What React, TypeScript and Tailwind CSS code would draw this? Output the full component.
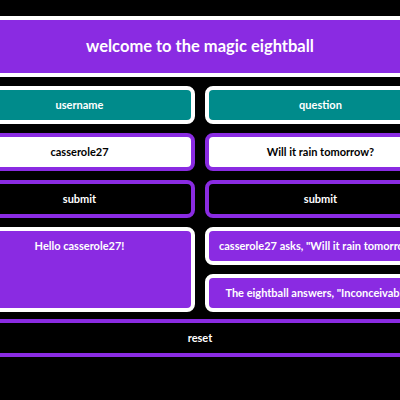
import React from "react";

const font = { fontFamily: "Lato, 'Noto Sans', sans-serif" };

function Box({ className, children }: { className: string; children?: React.ReactNode }) {
  return (
    <div className={`border-4 rounded-lg text-center font-bold text-[11px] leading-[30px] whitespace-nowrap overflow-hidden ${className}`}>
      {children}
    </div>
  );
}

export default function App() {
  return (
    <div className="w-[400px] h-[400px] bg-black overflow-hidden flex justify-center" style={font}>
      <div className="w-[472px] shrink-0 pt-4 flex flex-col">
        <div className="h-[61px] border-y-4 border-white bg-[#8a2be2] flex items-center justify-center text-white font-bold text-[16.5px]">
          welcome to the magic eightball
        </div>
        <div className="mt-[9px] grid grid-cols-2 gap-x-[10px] gap-y-[9px] auto-rows-[38px]">
          <Box className="border-white bg-[#008b8b] text-white">username</Box>
          <Box className="border-white bg-[#008b8b] text-white">question</Box>
          <Box className="border-[#8a2be2] bg-white text-black">casserole27</Box>
          <Box className="border-[#8a2be2] bg-white text-black">Will it rain tomorrow?</Box>
          <Box className="border-[#8a2be2] bg-black text-white">submit</Box>
          <Box className="border-[#8a2be2] bg-black text-white">submit</Box>
          <Box className="row-span-2 border-white bg-[#8a2be2] text-white">Hello casserole27!</Box>
          <Box className="border-white bg-[#8a2be2] text-white">casserole27 asks, "Will it rain tomorrow?"</Box>
          <Box className="border-white bg-[#8a2be2] text-white">The eightball answers, "Inconceivable!"</Box>
        </div>
        <div className="mt-[7px] h-[38px] border-4 border-[#8a2be2] bg-black text-white font-bold text-[11px] flex items-center justify-center">
          reset
        </div>
      </div>
    </div>
  );
}
